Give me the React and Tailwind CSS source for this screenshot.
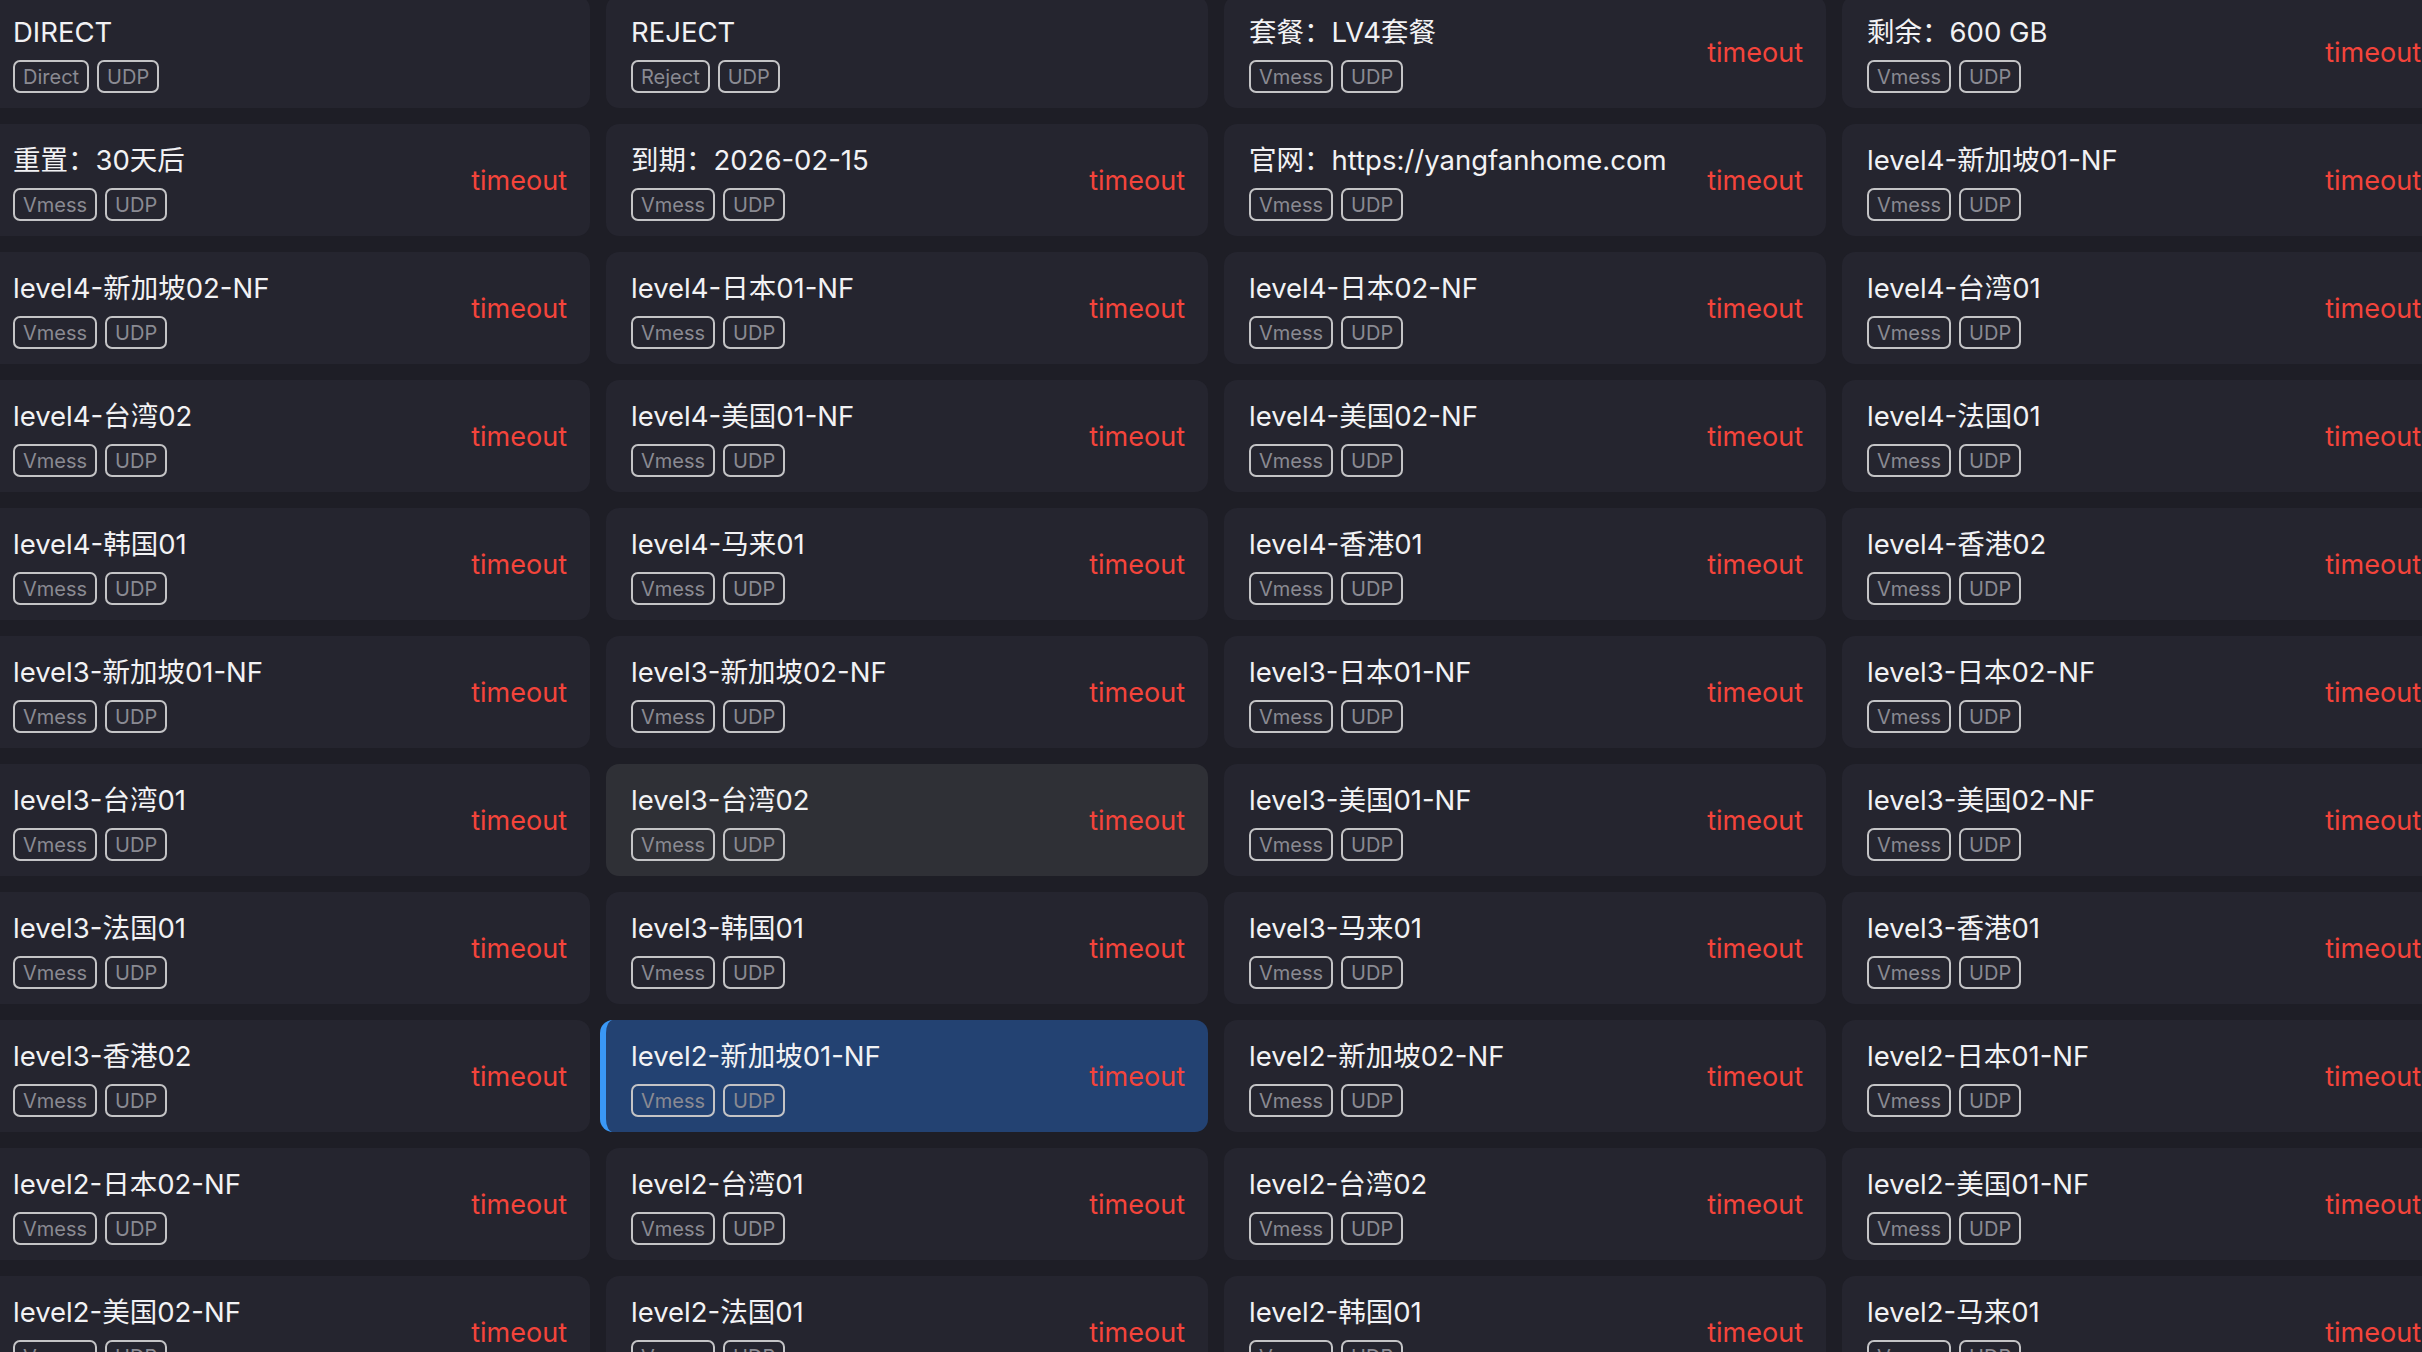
import React from 'react';

const rows = [
  ['DIRECT', 'REJECT', '套餐：LV4套餐', '剩余：600 GB'],
  ['重置：30天后', '到期：2026-02-15', '官网：https://yangfanhome.com', 'level4-新加坡01-NF'],
  ['level4-新加坡02-NF', 'level4-日本01-NF', 'level4-日本02-NF', 'level4-台湾01'],
  ['level4-台湾02', 'level4-美国01-NF', 'level4-美国02-NF', 'level4-法国01'],
  ['level4-韩国01', 'level4-马来01', 'level4-香港01', 'level4-香港02'],
  ['level3-新加坡01-NF', 'level3-新加坡02-NF', 'level3-日本01-NF', 'level3-日本02-NF'],
  ['level3-台湾01', 'level3-台湾02', 'level3-美国01-NF', 'level3-美国02-NF'],
  ['level3-法国01', 'level3-韩国01', 'level3-马来01', 'level3-香港01'],
  ['level3-香港02', 'level2-新加坡01-NF', 'level2-新加坡02-NF', 'level2-日本01-NF'],
  ['level2-日本02-NF', 'level2-台湾01', 'level2-台湾02', 'level2-美国01-NF'],
  ['level2-美国02-NF', 'level2-法国01', 'level2-韩国01', 'level2-马来01'],
];

const proxies = rows.flat().map((name) => {
  if (name === 'DIRECT') return { name, type: 'Direct', delay: null };
  if (name === 'REJECT') return { name, type: 'Reject', delay: null };
  return { name, type: 'Vmess', delay: 'timeout' };
});

const FONT = { fontFamily: 'Inter, "Noto Sans CJK SC", sans-serif' };

function Tag({ children }) {
  return (
    <span className="flex h-[33px] items-center rounded-[7px] border-2 border-[#c4c4c6] px-[8px] text-[20px] text-[#8a8a92]">
      {children}
    </span>
  );
}

function ProxyCard({ proxy }) {
  const selected = proxy.name === 'level2-新加坡01-NF';
  const hovered = proxy.name === 'level3-台湾02';

  let cardClass = 'bg-[#25252f]';
  if (hovered) cardClass = 'bg-[#2f3036]';
  if (selected) cardClass = 'bg-[#234272] border-l-[6px] border-[#3a98f6] -ml-[6px]';

  return (
    <div className={`flex h-[112px] items-center justify-between rounded-[13px] pl-[25px] pr-[23px] ${cardClass}`}>
      <div className="flex flex-col self-start pt-[18px]">
        <div className="whitespace-nowrap text-[27.5px] leading-[36px] text-[#f2f2f4]">{proxy.name}</div>
        <div className="mt-[10px] flex gap-[8px]">
          <Tag>{proxy.type}</Tag>
          <Tag>UDP</Tag>
        </div>
      </div>
      {proxy.delay && (
        <span className="pt-[2px] text-[27px] text-[#f4443b]">{proxy.delay}</span>
      )}
    </div>
  );
}

export default function App() {
  return (
    <div className="h-screen w-full overflow-hidden bg-[#1e1e26]" style={FONT}>
      <div className="-ml-[12px] -mt-[4px] grid grid-cols-[repeat(4,602px)] gap-[16px]">
        {proxies.map((p) => (
          <ProxyCard key={p.name} proxy={p} />
        ))}
      </div>
    </div>
  );
}
